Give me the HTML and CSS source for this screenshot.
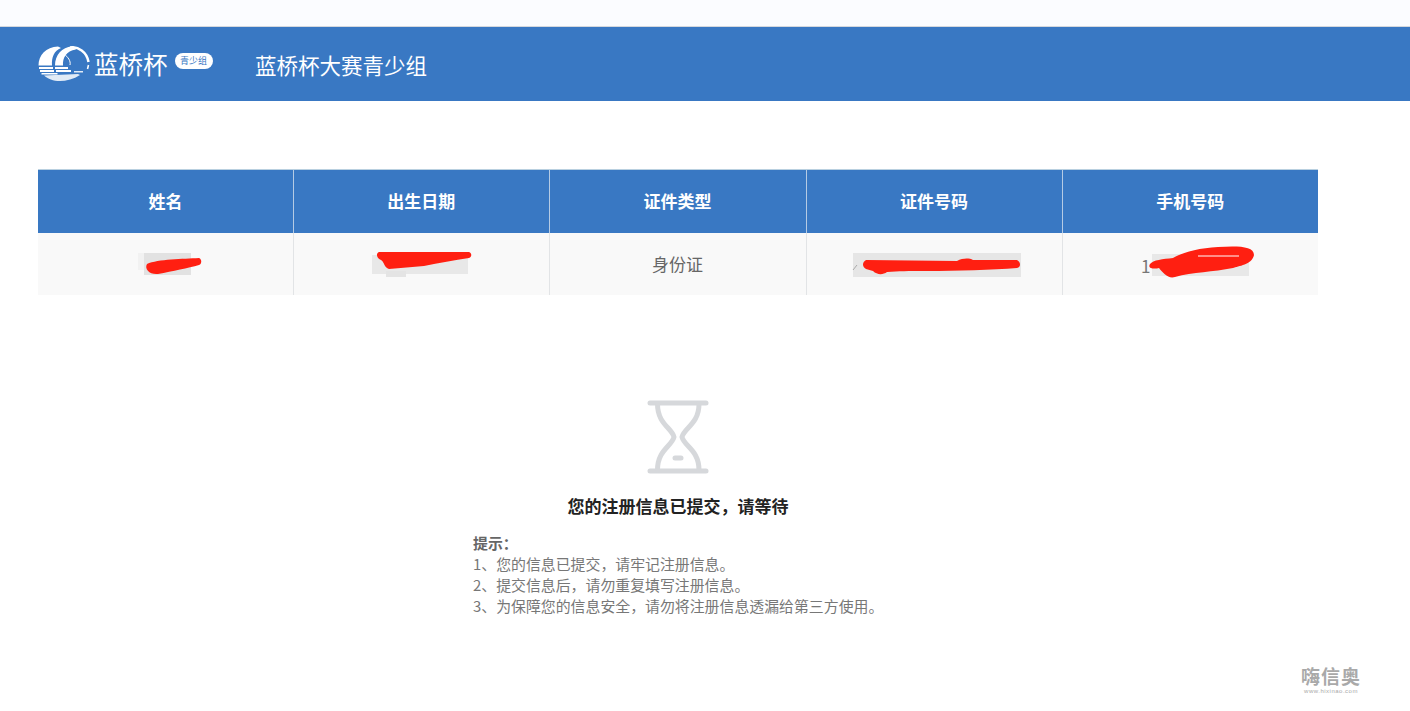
FILE: index.html
```html
<!DOCTYPE html>
<html lang="zh-CN">
<head>
<meta charset="UTF-8">
<title>蓝桥杯大赛青少组</title>
<link rel="stylesheet" href="styles.css">
</head>
<body>

<div class="topbar"></div>

<div class="header">
    <div class="logo">
        <svg class="logo-mark" width="52" height="36" viewBox="0 0 52 36">
            <g fill="#fff">
                <!-- left and middle crescents -->
                <path d="M20 0.500 C8 1 0.500 9 0.500 19.500 L14 19.500 C13.500 11 16 5 23 2 Z"/>
                <path d="M34 0.500 C24 1 17 9 17 19.500 L25 19.500 C24.500 12 28 5 38 3.500 C37 2 35.500 1 34 0.500 Z"/>
                <!-- water lines -->
                <rect x="1" y="21" width="14" height="2"/>
                <rect x="2" y="24" width="14" height="2"/>
                <rect x="3.500" y="27" width="16" height="1.500"/>
                <rect x="17" y="21" width="13" height="2"/>
                <rect x="18" y="24" width="15" height="2"/>
                <path d="M6 29.500 L40 28 L42 29 C36 33 28 35 22 35 C15 35 10 33 6 29.500 Z" opacity="0.85"/>
                <rect x="36" y="25" width="9" height="1.500" opacity="0.85"/>
            </g>
            <g fill="none" stroke="#fff">
                <path d="M32 1.500 C40 0 49 6 50.500 16" stroke-width="2.500"/>
                <path d="M26 8 C30 11 33 15 32 19" stroke-width="1"/>
                <path d="M50.500 19 L49.500 23" stroke-width="1.500"/>
            </g>
        </svg>
        <span class="logo-text">蓝桥杯</span>
        <span class="logo-badge">青少组</span>
    </div>
    <div class="header-title">蓝桥杯大赛青少组</div>
</div>

<table class="info-table">
    <thead>
        <tr>
            <th>姓名</th>
            <th>出生日期</th>
            <th>证件类型</th>
            <th>证件号码</th>
            <th>手机号码</th>
        </tr>
    </thead>
    <tbody>
        <tr>
            <td>
                <svg class="redact" width="256" height="62" viewBox="0 0 256 62">
                    <rect x="106" y="20" width="47" height="22" fill="#e2e2e2"/>
                    <rect x="100" y="20" width="6" height="17" fill="#f2f2f2"/>
                    <path d="M109 31 C120 26 145 26 161 25 C164 26 164 31 161 32 C150 35 135 38 120 41 C112 42 106 36 109 31 Z" fill="#ff1f11"/>
                </svg>
            </td>
            <td>
                <svg class="redact" width="256" height="62" viewBox="0 0 256 62">
                    <rect x="78" y="22" width="96" height="19" fill="#e8e8e8"/>
                    <rect x="92" y="38" width="20" height="6" fill="#e4e4e4"/>
                    <path d="M85 19 L175 19 C178 20 178 24 175 25 C160 27 145 30 130 33 L95 36 C90 35 90 28 87 27 C82 25 82 20 85 19 Z" fill="#ff1f11"/>
                </svg>
            </td>
            <td>身份证</td>
            <td>
                <svg class="redact" width="256" height="62" viewBox="0 0 256 62">
                    <rect x="46" y="20" width="168" height="24" fill="#e6e6e6"/>
                    <path d="M59 27 L150 28 C156 25 162 25 166 27 L210 27 C214 29 214 34 210 35 C185 37 150 38 120 38 C100 38 92 38 80 39 C76 42 70 42 66 38 L59 36 C55 34 55 29 59 27 Z" fill="#ff1f11"/>
                    <path d="M50 32 L46 37" stroke="#aaa" stroke-width="1" fill="none"/>
                </svg>
            </td>
            <td>
                <svg class="redact" width="256" height="62" viewBox="0 0 256 62">
                    <rect x="89" y="21" width="97" height="22" fill="#e8e8e8"/>
                    <text class="redact-digit" x="78" y="40">1</text>
                    <path d="M87 31 C90 27 100 26 110 25 C118 20 135 15 155 14 C175 13 191 13 191 22 C189 32 175 33 170 35 C150 39 130 39 112 44 C105 46 100 40 96 35 C92 36 84 36 87 31 Z" fill="#ff1f11"/>
                    <path d="M135 23 L176 23" stroke="#fff" stroke-width="1"/>
                </svg>
            </td>
        </tr>
    </tbody>
</table>

<div class="status">
    <svg class="hourglass" width="62" height="74" viewBox="0 0 62 74">
        <g fill="none" stroke="#d6d8db" stroke-width="5" stroke-linecap="round">
            <path d="M3 3 L59 3"/>
            <path d="M3 71 L59 71"/>
            <path d="M10.500 4 C10.500 24 25 28 27 37 C25 46 10.500 50 10.500 70"/>
            <path d="M52 4 C52 24 37 28 35 37 C37 46 52 50 52 70"/>
            <path d="M28 58 L34 58"/>
        </g>
    </svg>
    <h2 class="status-title">您的注册信息已提交，请等待</h2>
    <div class="tips">
        <p class="tips-head">提示：</p>
        <p>1、您的信息已提交，请牢记注册信息。</p>
        <p>2、提交信息后，请勿重复填写注册信息。</p>
        <p>3、为保障您的信息安全，请勿将注册信息透漏给第三方使用。</p>
    </div>
</div>

<div class="watermark">
    <div class="watermark-name">嗨信奥</div>
    <div class="watermark-url">www.hixinao.com</div>
</div>

</body>
</html>
```

FILE: styles.css
```css
body {
    margin: 0;
    height: 711px;
    overflow: hidden;
    position: relative;
    background-color: #fff;
    font-family: "Noto Sans CJK SC", "Liberation Sans", sans-serif;
}
p {
    margin: 0;
}
.topbar {
    height: 27px;
    background-color: #fbfcff;
    border-bottom: 1px solid #d4d8de;
    box-sizing: border-box;
}
.header {
    height: 74px;
    background-color: #3978c3;
    display: flex;
    align-items: center;
    padding-left: 38px;
    color: #fff;
}
.logo {
    display: flex;
    align-items: center;
    width: 217px;
}
.logo-mark {
    flex-shrink: 0;
}
.logo-text {
    margin-left: 4px;
    font-size: 24.500px;
    line-height: 30px;
}
.logo-badge {
    margin-left: 7px;
    margin-bottom: 6px;
    width: 38px;
    height: 16px;
    line-height: 16px;
    border-radius: 8px;
    background-color: #fff;
    color: #3978c3;
    font-size: 9px;
    text-align: center;
}
.header-title {
    font-size: 21.500px;
    line-height: 30px;
    margin-top: 2px;
}
.info-table {
    margin: 68px 0 0 38px;
    width: 1280px;
    table-layout: fixed;
    border-collapse: collapse;
}
.info-table th:nth-child(1),
.info-table th:nth-child(2) {
    width: 255.500px;
}
.info-table th:nth-child(3) {
    width: 257px;
}
.info-table th {
    height: 63px;
    padding: 0 0 2px;
    box-sizing: border-box;
    background-color: #3978c3;
    color: #fff;
    font-size: 17px;
    font-weight: bold;
    border-left: 1px solid #b5cbe4;
    border-top: 1px solid #b9d0e0;
}
.info-table td {
    height: 62px;
    padding: 0;
    position: relative;
    background-color: #f9f9f9;
    color: #666;
    font-size: 17px;
    text-align: center;
    border-left: 1px solid #e2e4e6;
}
.info-table th:first-child,
.info-table td:first-child {
    border-left: none;
}
.redact {
    position: absolute;
    left: 0;
    top: 0;
}
.redact-digit {
    font-size: 17px;
    fill: #777;
}
.status {
    margin-top: 105px;
    width: 1356px;
    display: flex;
    flex-direction: column;
    align-items: center;
}
.hourglass {
    display: block;
}
.status-title {
    margin: 20px 0 0;
    font-size: 17px;
    line-height: 24px;
    font-weight: bold;
    color: #222;
}
.tips {
    align-self: flex-start;
    margin: 14px 0 0 473px;
    font-size: 14.900px;
    line-height: 21px;
    color: #777;
}
.tips-head {
    font-weight: bold;
    color: #666;
}
.watermark {
    position: absolute;
    left: 1301px;
    top: 665px;
    width: 60px;
    text-align: center;
    color: #a9a9a9;
}
.watermark-name {
    font-size: 19px;
    line-height: 22px;
    font-weight: bold;
    letter-spacing: 1px;
    white-space: nowrap;
}
.watermark-url {
    font-family: "Liberation Sans", sans-serif;
    font-size: 6px;
    line-height: 8px;
    letter-spacing: 0.5px;
    white-space: nowrap;
}
```
